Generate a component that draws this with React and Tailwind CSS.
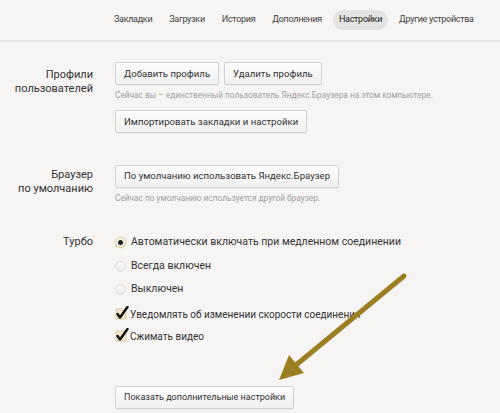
import React from 'react';

const font = { fontFamily: 'Roboto, "Noto Sans", sans-serif' };

// Plain grey settings button
const Btn = ({ children, className = '' }) => (
  <button
    className={`h-[23px] px-[8px] border border-[#d2d2d2] rounded-[2px] bg-gradient-to-b from-[#fdfdfd] to-[#f0f0f0] text-[#333] leading-none shadow-[0_1px_0_rgba(0,0,0,0.04)] ${className}`}
  >
    {children}
  </button>
);

const Radio = ({ checked }) => (
  <span
    className={`w-[11px] h-[11px] rounded-full border flex items-center justify-center shrink-0 bg-gradient-to-b from-[#fbfbfb] to-[#e9e9e9] ${
      checked ? 'border-[#d9cf9f] shadow-[0_0_2px_#e8dca0]' : 'border-[#dcdcdc]'
    }`}
  >
    {checked && <span className="w-[5px] h-[5px] rounded-full bg-[#222]" />}
  </span>
);

const Check = () => (
  <svg width="14" height="14" viewBox="0 0 14 14" className="shrink-0 -mt-[4px]">
    <rect x="1" y="3" width="10" height="10" fill="#efe6c9" stroke="#d8cfae" />
    <path d="M2.5 8 L5 11.5 L12.5 1" fill="none" stroke="#111" strokeWidth="2.4" strokeLinecap="round" strokeLinejoin="round" />
  </svg>
);

const Row = ({ label, children, className = '' }) => (
  <div className={`flex ${className}`}>
    <div className="w-[93px] text-right text-[11px] leading-[14px] text-[#333] pt-[6px] shrink-0">{label}</div>
    <div className="ml-[22px] flex-1">{children}</div>
  </div>
);

const App = () => {
  const tabs = ['Закладки', 'Загрузки', 'История', 'Дополнения', 'Настройки', 'Другие устройства'];

  return (
    <div className="relative w-[500px] h-[413px] overflow-hidden bg-[#f6f5f3]" style={font}>
      {/* top nav */}
      <div className="h-[42px] border-b-2 border-[#e9e8e6] flex items-center pl-[106px] gap-[1px] text-[9px] tracking-[-0.3px] text-[#444] whitespace-nowrap">
        {tabs.map((t) =>
          t === 'Настройки' ? (
            <span key={t} className="mx-[2px] px-[6px] py-[3px] rounded-full bg-[#e4e3e1] text-[#222]">{t}</span>
          ) : (
            <span key={t} className="px-[8px] py-[3px]">{t}</span>
          )
        )}
      </div>

      <div className="pt-[20px]">
        <Row label={<>Профили<br />пользователей</>}>
          <div className="flex gap-[5px] text-[9.6px]">
            <Btn>Добавить профиль</Btn>
            <Btn>Удалить профиль</Btn>
          </div>
          <div className="text-[8.3px] text-[#a0a0a0] mt-[4px] whitespace-nowrap">
            Сейчас вы – единственный пользователь Яндекс.Браузера на этом компьютере.
          </div>
          <Btn className="mt-[9px] text-[9.6px]">Импортировать закладки и настройки</Btn>
        </Row>

        <Row className="mt-[29px]" label={<>Браузер<br />по умолчанию</>}>
          <Btn className="text-[9.6px]">По умолчанию использовать Яндекс.Браузер</Btn>
          <div className="text-[8.3px] text-[#a0a0a0] mt-[4px]">Сейчас по умолчанию используется другой браузер.</div>
        </Row>

        <div className="flex mt-[31px]">
          <div className="w-[93px] text-right text-[11px] leading-[14px] text-[#333]">Турбо</div>
          <div className="ml-[22px] flex flex-col text-[10.5px] text-[#333] leading-[14px]">
            <label className="flex items-center gap-[5px]"><Radio checked />Автоматически включать при медленном соединении</label>
            <label className="flex items-center gap-[5px] mt-[10px]"><Radio />Всегда включен</label>
            <label className="flex items-center gap-[5px] mt-[9px]"><Radio />Выключен</label>
            <label className="flex items-center gap-[1px] mt-[12px] text-[10px]"><Check />Уведомлять об изменении скорости соединения</label>
            <label className="flex items-center gap-[1px] mt-[8px] text-[10px]"><Check />Сжимать видео</label>
          </div>
        </div>

        <div className="pl-[115px] mt-[39px]">
          <Btn className="h-[21px] text-[9px]">Показать дополнительные настройки</Btn>
        </div>
      </div>

      {/* annotation arrow */}
      <svg className="absolute left-0 top-0 pointer-events-none" width="500" height="413">
        <line x1="404" y1="276" x2="296" y2="365" stroke="#9c7f22" strokeWidth="5" strokeLinecap="round" />
        <polygon points="279,380 289,355 304,373" fill="#9c7f22" />
      </svg>
    </div>
  );
};

export default App;
